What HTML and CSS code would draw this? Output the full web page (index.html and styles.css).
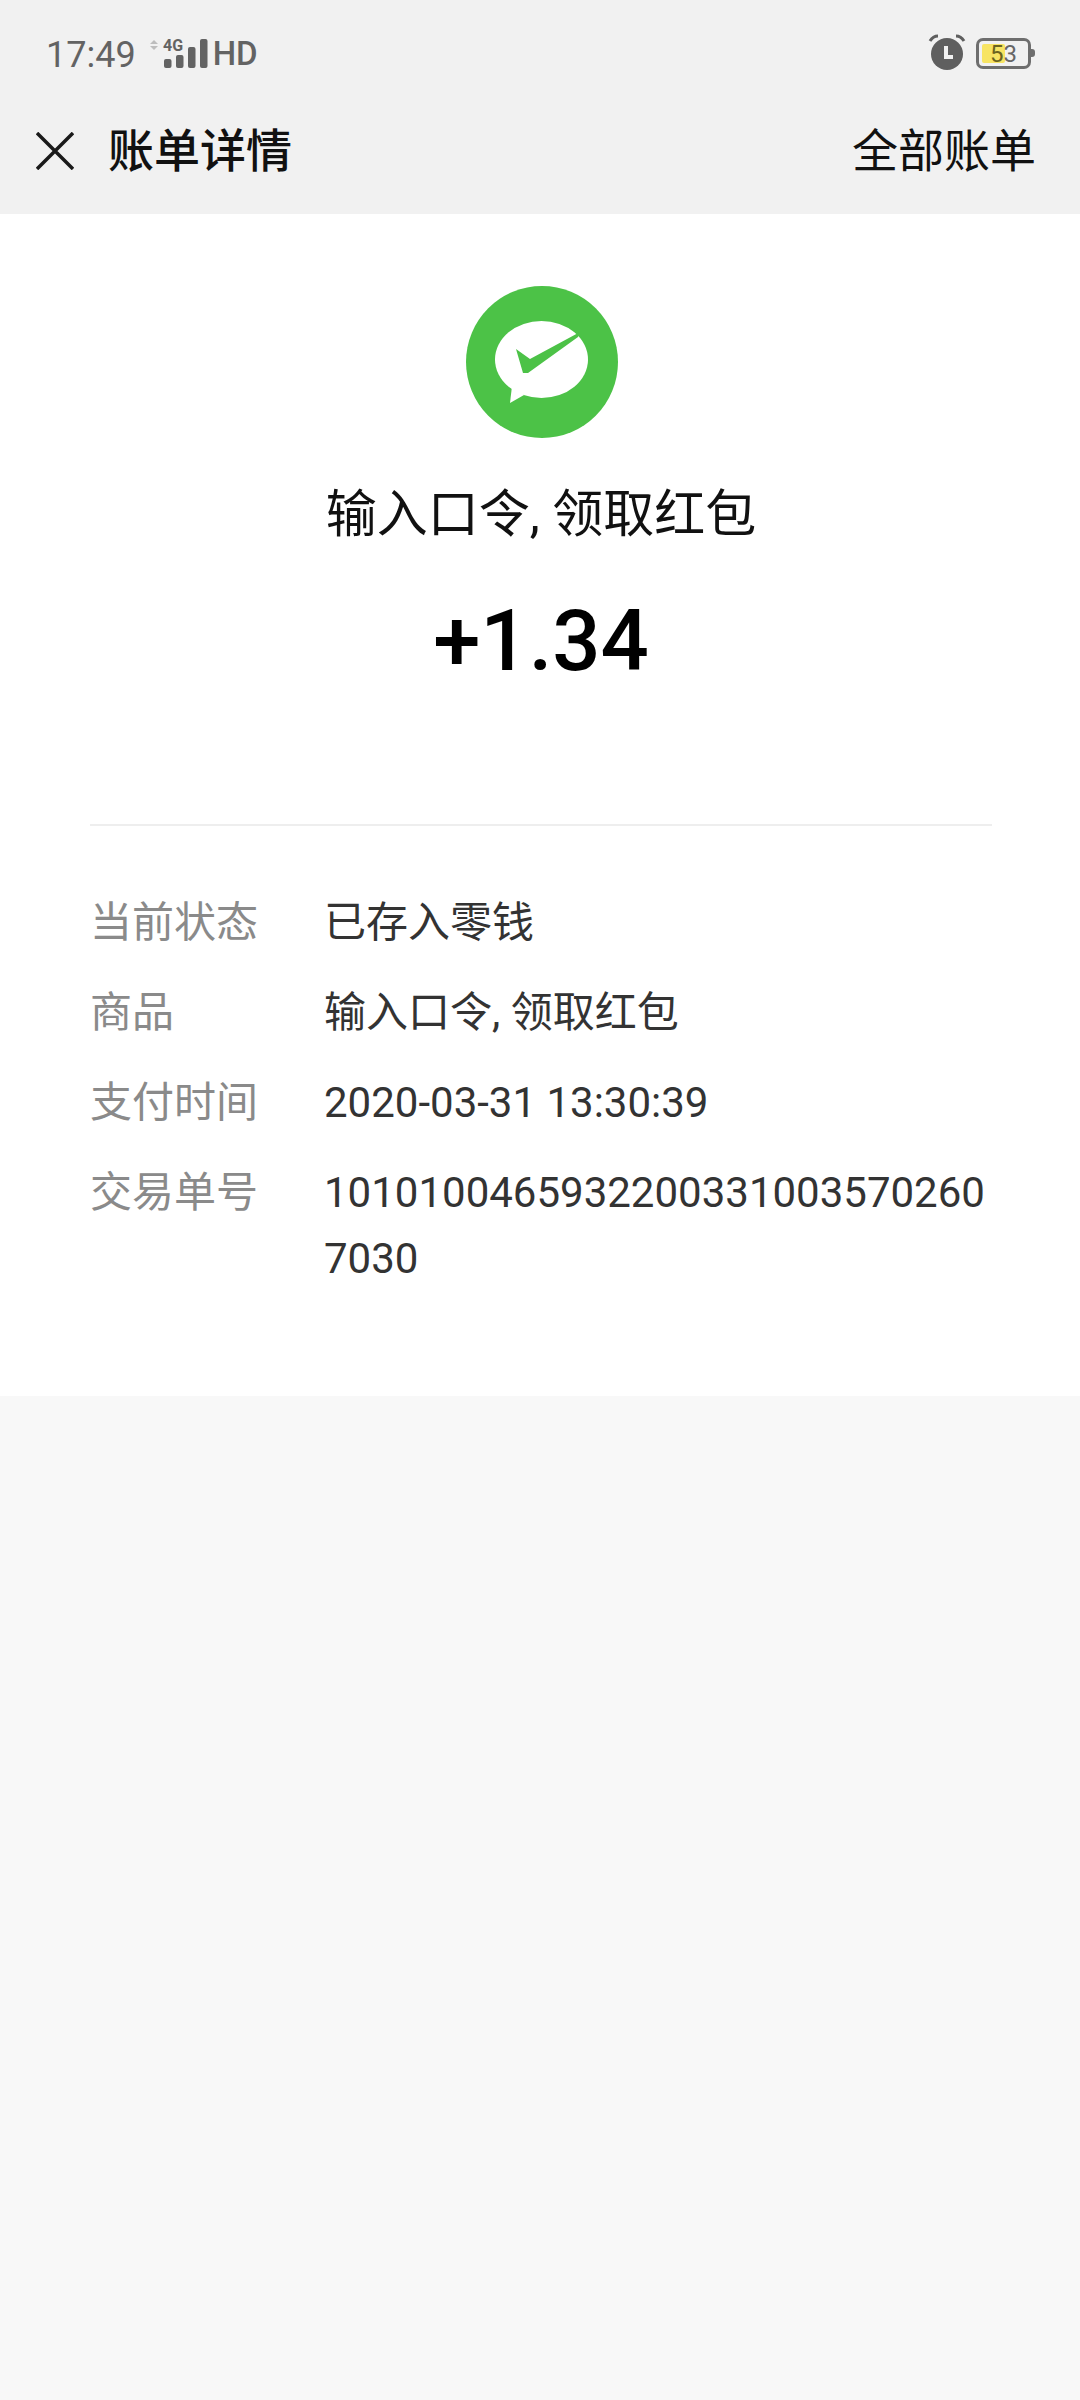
FILE: index.html
```html
<!DOCTYPE html>
<html lang="zh-CN">
<head>
  <meta charset="UTF-8" />
  <meta name="viewport" content="width=device-width, initial-scale=1.0"/>
  <title>账单详情</title>
  <link rel="stylesheet" href="styles.css">
</head>
<body>
  <header class="top">
    <div class="status-bar">
      <div class="status-left">
        <span class="time">17:49</span>
        <svg class="signal" width="62" height="36" viewBox="0 0 62 36">
          <path class="arrows" d="M2 10l4-4 4 4zM2 12l4 4 4-4z" />
          <text class="net" x="15" y="17">4G</text>
          <rect x="16" y="25" width="7.5" height="9" rx="2" />
          <rect x="28" y="21" width="7.5" height="13" rx="2" />
          <rect x="40" y="13" width="7.5" height="21" rx="2" />
          <rect x="52" y="5" width="7.5" height="29" rx="2" />
        </svg>
        <span class="hd">HD</span>
      </div>
      <div class="status-right">
        <svg class="alarm" width="38" height="38" viewBox="0 0 38 38">
          <circle cx="19" cy="21" r="16" fill="#5f5f5f" />
          <path d="M18 13v11h7" fill="none" stroke="#f1f1f1" stroke-width="4" />
          <path d="M2 8q3-5 8-5M36 8q-3-5-8-5" fill="none" stroke="#5f5f5f" stroke-width="3" />
        </svg>
        <div class="battery">
          <div class="battery-box">
            <div class="battery-fill" style="width: 53%"></div>
            <span class="battery-num"><span class="battery-on">5</span>3</span>
          </div>
          <div class="battery-tip"></div>
        </div>
      </div>
    </div>
    <nav class="nav">
      <div class="nav-left">
        <svg class="close" width="38" height="38" viewBox="0 0 38 38">
          <path d="M1 1l36 36M37 1L1 37" stroke="#1a1a1a" stroke-width="3.5" fill="none" />
        </svg>
        <span class="nav-title">账单详情</span>
      </div>
      <span class="nav-link">全部账单</span>
    </nav>
  </header>

  <main class="bill">
    <div class="summary">
      <svg class="logo" width="152" height="152" viewBox="0 0 152 152">
        <circle cx="76" cy="76" r="76" fill="#4cc247" />
        <ellipse cx="75.5" cy="73.5" rx="46.5" ry="38.5" fill="#fff" />
        <path fill="#fff" d="M46 100l-2 17 14-8z" />
        <path fill="#4cc247" d="M50 63l14 10 50-27-2 5-50 36-5 0z" />
      </svg>
      <h1 class="name">输入口令, 领取红包</h1>
      <div class="amount">+1.34</div>
    </div>

    <dl class="details">
      <div class="row"><dt>当前状态</dt><dd>已存入零钱</dd></div>
      <div class="row"><dt>商品</dt><dd>输入口令, 领取红包</dd></div>
      <div class="row"><dt>支付时间</dt><dd>2020-03-31 13:30:39</dd></div>
      <div class="row"><dt>交易单号</dt><dd>10101004659322003310035702607030</dd></div>
    </dl>
  </main>
</body>
</html>
```

FILE: styles.css
```css
* {
  box-sizing: border-box;
}

body {
  margin: 0;
  min-height: 2400px;
  background: #f8f8f8;
  font-family: Roboto, "Noto Sans CJK SC", sans-serif;
  color: #000;
}

.top {
  height: 214px;
  background: #f1f1f1;
}

.status-bar {
  height: 110px;
  padding: 34px 45px 0 46px;
  display: flex;
  justify-content: space-between;
  align-items: flex-start;
  color: #636363;
}

.status-left {
  display: flex;
  align-items: center;
  height: 38px;
}

.time {
  font-size: 36px;
  line-height: 38px;
  padding-top: 4px;
}

.signal {
  margin-left: 12px;
  margin-top: -2px;
  fill: #636363;
}

.signal .arrows {
  fill: #bdbdbd;
}

.signal .net {
  font-size: 16px;
  font-weight: 700;
  fill: #636363;
}

.hd {
  font-size: 33px;
  font-weight: 500;
  line-height: 38px;
  margin-left: 3px;
  padding-top: 2px;
}

.status-right {
  display: flex;
  align-items: center;
  gap: 10px;
  margin-top: -1px;
}

.battery {
  display: flex;
  align-items: center;
  margin-top: 2px;
}

.battery-box {
  position: relative;
  width: 55px;
  height: 31px;
  border: 3px solid #6e6e6e;
  border-radius: 7px;
  padding: 3px;
  display: flex;
}

.battery-fill {
  background: #f7e463;
  border-radius: 2px;
}

.battery-num {
  position: absolute;
  left: 11px;
  top: -2px;
  font-size: 24px;
  line-height: 30px;
  color: #666;
}

.battery-on {
  color: #6b6320;
}

.battery-tip {
  width: 4px;
  height: 8px;
  background: #6e6e6e;
  border-radius: 0 3px 3px 0;
}

.nav {
  height: 104px;
  padding: 0 44px 22px 36px;
  display: flex;
  justify-content: space-between;
  align-items: center;
}

.nav-left {
  display: flex;
  align-items: center;
  gap: 34px;
}

.nav-title {
  font-size: 46px;
  font-weight: 500;
  line-height: 60px;
  color: #111;
}

.nav-link {
  font-size: 46px;
  line-height: 60px;
  color: #111;
}

.bill {
  height: 1182px;
  background: #fff;
  padding: 72px 88px 0 90px;
}

.summary {
  display: flex;
  flex-direction: column;
  align-items: center;
  height: 540px;
  border-bottom: 2px solid #eeeeee;
}

.logo {
  display: block;
  margin-left: 2px;
}

.name {
  margin: 42px 0 0;
  font-size: 51px;
  font-weight: 400;
  line-height: 70px;
  color: #111;
}

.amount {
  margin-top: 39px;
  font-size: 85px;
  font-weight: 500;
  line-height: 104px;
}

.details {
  margin: 64px 0 0;
}

.row {
  display: flex;
  line-height: 66px;
  margin-bottom: 24px;
  font-size: 42px;
}

.row dt {
  width: 234px;
  flex: none;
  color: #8a8a8a;
}

.row dd {
  margin: 0;
  min-width: 0;
  flex: 1;
  word-break: break-all;
  color: #333;
}
```
